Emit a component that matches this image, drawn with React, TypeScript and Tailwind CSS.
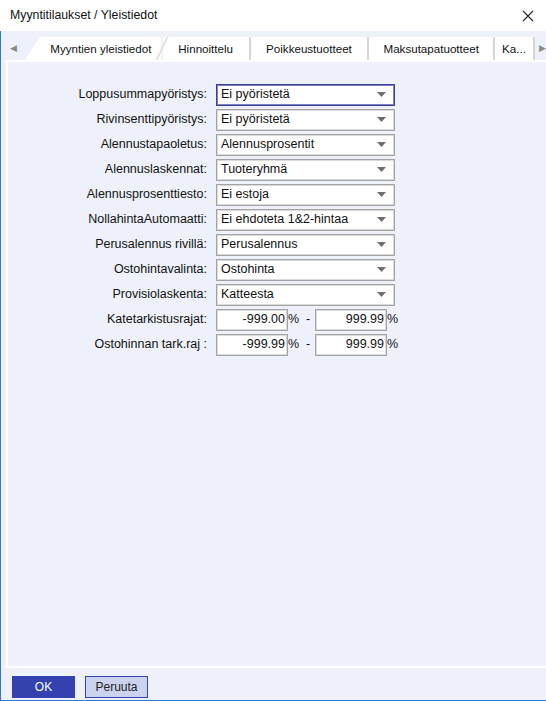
import React from "react";

const FONT = "font-['Liberation_Sans',Arial,sans-serif]";

type Row =
  | { label: string; kind: "select"; value: string; focused?: boolean }
  | { label: string; kind: "range"; from: string; to: string };

const ROWS: Row[] = [
  { label: "Loppusummapyöristys:", kind: "select", value: "Ei pyöristetä", focused: true },
  { label: "Rivinsenttipyöristys:", kind: "select", value: "Ei pyöristetä" },
  { label: "Alennustapaoletus:", kind: "select", value: "Alennusprosentit" },
  { label: "Alennuslaskennat:", kind: "select", value: "Tuoteryhmä" },
  { label: "Alennusprosenttiesto:", kind: "select", value: "Ei estoja" },
  { label: "NollahintaAutomaatti:", kind: "select", value: "Ei ehdoteta 1&2-hintaa" },
  { label: "Perusalennus rivillä:", kind: "select", value: "Perusalennus" },
  { label: "Ostohintavalinta:", kind: "select", value: "Ostohinta" },
  { label: "Provisiolaskenta:", kind: "select", value: "Katteesta" },
  { label: "Katetarkistusrajat:", kind: "range", from: "-999.00", to: "999.99" },
  { label: "Ostohinnan tark.raj :", kind: "range", from: "-999.99", to: "999.99" },
];

const TABS = [
  { title: "Hinnoittelu", w: "w-[86px]" },
  { title: "Poikkeustuotteet", w: "w-[117px]" },
  { title: "Maksutapatuotteet", w: "w-[124px]" },
  { title: "Ka...", w: "w-[38px]" },
];

function Select({ value, focused }: { value: string; focused?: boolean }) {
  return (
    <div
      className={
        focused
          ? "flex h-[22px] w-[179px] items-center justify-between border border-[#3b3f8e] bg-white pl-[4px] pr-[8px] shadow-[inset_0_0_0_1px_#7b80c0]"
          : "flex h-[22px] w-[179px] items-center justify-between border border-[#a3a3a3] bg-white pl-[4px] pr-[8px] shadow-[inset_0_0_0_1px_#dadada]"
      }
    >
      <span>{value}</span>
      <svg width="9" height="5" viewBox="0 0 9 5">
        <path d="M0 0h9L4.5 5z" fill="#6e6e6e" />
      </svg>
    </div>
  );
}

function NumBox({ value }: { value: string }) {
  return (
    <div className="flex h-[22px] w-[72px] items-center justify-end border border-[#a3a3a3] bg-white pr-[2px] shadow-[inset_0_0_0_1px_#dadada]">
      {value}
    </div>
  );
}

export default function App() {
  return (
    <div className={`flex h-[701px] w-[546px] flex-col overflow-hidden bg-[#eef1f9] text-[12px] text-[#111] ${FONT}`}>
      {/* title bar */}
      <div className="flex h-[31px] items-center justify-between bg-white pl-[10px] pr-[12px] text-[12.3px]">
        <span>Myyntitilaukset / Yleistiedot</span>
        <svg width="12" height="12" viewBox="0 0 12 12">
          <path d="M1 1l10 10M11 1L1 11" stroke="#222" strokeWidth="1.1" />
        </svg>
      </div>

      <div className="flex flex-1 flex-col border-b border-l border-[#2b7ad6]">
        {/* tab strip */}
        <div className="flex h-[29px] items-end text-[11.6px]">
          <div className="flex h-[23px] w-[24px] items-center pl-[9px] text-[9px] text-[#8a8a8a]">◀</div>
          <div className="flex h-[23px] w-[136px] items-center justify-center bg-white pl-[16px] [clip-path:polygon(15px_0,100%_0,100%_100%,0_100%)]">
            Myyntien yleistiedot
          </div>
          <div className="h-[23px] w-[2px] -skew-x-[25deg] bg-[#e0e0e0]" />
          {TABS.map((t) => (
            <React.Fragment key={t.title}>
              <div className={`flex h-[23px] items-center justify-center bg-white ${t.w}`}>{t.title}</div>
              <div className="h-[23px] w-[2px] bg-[#d6d6d6]" />
            </React.Fragment>
          ))}
          <div className="flex h-[23px] items-center pl-[4px] text-[9px] text-[#8a8a8a]">▶</div>
        </div>

        {/* page body */}
        <div className="ml-[5px] flex-1 border-2 border-r-0 border-white pt-[20px] text-[12.5px]">
          <div className="grid grid-cols-[199px_auto] gap-x-[9px]">
            {ROWS.map((r) => (
              <React.Fragment key={r.label}>
                <div className="flex h-[25px] items-center justify-end">{r.label}</div>
                <div className="flex h-[25px] items-center">
                  {r.kind === "select" ? (
                    <Select value={r.value} focused={r.focused} />
                  ) : (
                    <>
                      <NumBox value={r.from} />
                      <span className="w-[27px]">% &nbsp;-</span>
                      <NumBox value={r.to} />
                      <span>%</span>
                    </>
                  )}
                </div>
              </React.Fragment>
            ))}
          </div>
        </div>

        {/* dialog buttons */}
        <div className="flex h-[32px] items-start gap-[10px] pl-[11px] pt-[8px]">
          <button className="h-[22px] w-[63px] bg-[#3342ae] text-white">OK</button>
          <button className="h-[22px] w-[63px] border border-[#3342ae] bg-[#ccd3ef] text-[#222]">Peruuta</button>
        </div>
      </div>
    </div>
  );
}
